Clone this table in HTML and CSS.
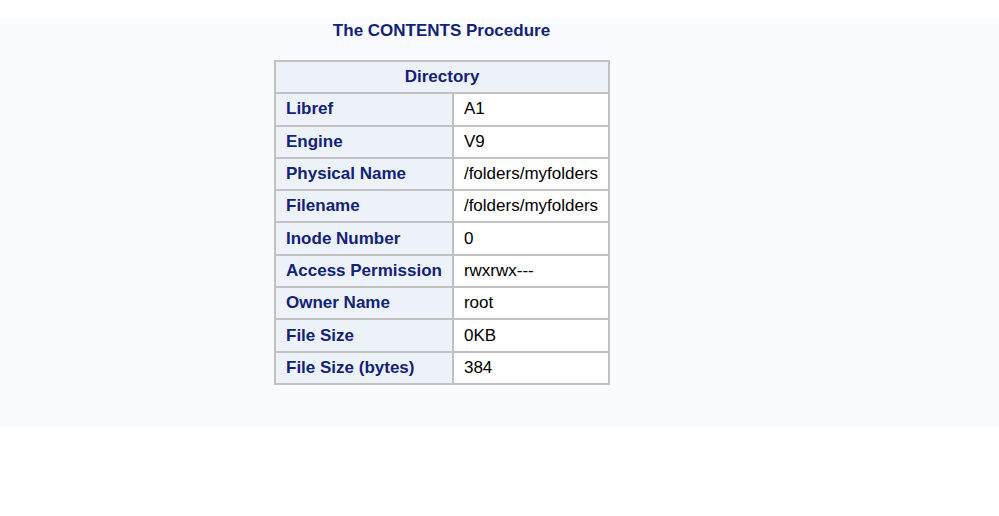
FILE: index.html
```html
<!DOCTYPE html>
<html>
<head>
<meta charset="utf-8">
<link rel="stylesheet" href="styles.css">
</head>
<body>
<div class="panel">
  <div class="proc">
    <h1 class="title">The CONTENTS Procedure</h1>
    <table class="dir">
      <thead>
        <tr><th class="caption" colspan="2">Directory</th></tr>
      </thead>
      <tbody>
        <tr><th class="label">Libref</th><td class="data">A1</td></tr>
        <tr><th class="label">Engine</th><td class="data">V9</td></tr>
        <tr><th class="label">Physical Name</th><td class="data">/folders/myfolders</td></tr>
        <tr><th class="label">Filename</th><td class="data">/folders/myfolders</td></tr>
        <tr><th class="label">Inode Number</th><td class="data">0</td></tr>
        <tr><th class="label">Access Permission</th><td class="data">rwxrwx---</td></tr>
        <tr><th class="label">Owner Name</th><td class="data">root</td></tr>
        <tr><th class="label">File Size</th><td class="data">0KB</td></tr>
        <tr><th class="label">File Size (bytes)</th><td class="data">384</td></tr>
      </tbody>
    </table>
  </div>
</div>
</body>
</html>
```
FILE: styles.css
```css
html, body {
  margin: 0;
  padding: 0;
  background: #ffffff;
  font-family: "Liberation Sans", Arial, sans-serif;
}

.panel {
  margin-top: 19px;
  height: 408px;
  background: #fafbfe;
}

.proc {
  margin-left: 274px;
  width: 335px;
}

.title {
  margin: 0;
  padding-top: 2px;
  height: 39px;
  font-size: 17px;
  font-weight: bold;
  color: #112277;
  text-align: center;
  line-height: 20px;
}

.dir {
  border: 1px solid #c1c1c1;
  border-spacing: 0;
  border-collapse: separate;
  width: 335px;
  font-size: 17px;
}

.dir th,
.dir td {
  border: 1px solid #c1c1c1;
  padding: 5px 10px;
  line-height: 20px;
  height: 20.3px;
  white-space: nowrap;
}

.caption {
  background: #edf2f9;
  color: #112277;
  font-weight: bold;
  text-align: center;
}

.label {
  background: #edf2f9;
  color: #112277;
  font-weight: bold;
  text-align: left;
  width: 156px;
}

.data {
  background: #ffffff;
  color: #000000;
  text-align: left;
}
```
